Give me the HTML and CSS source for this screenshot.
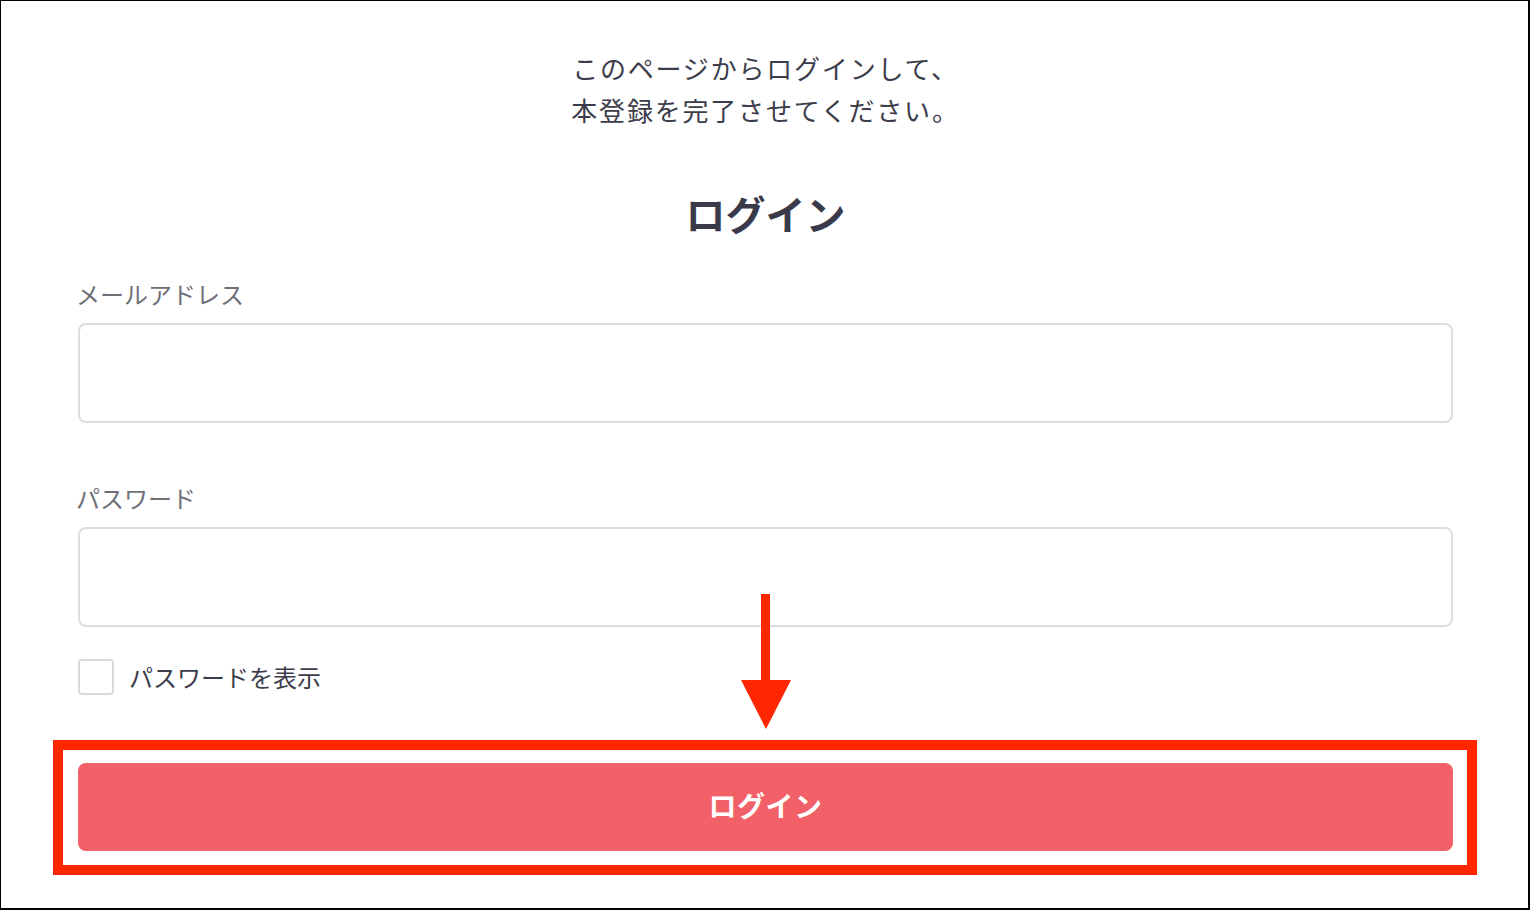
FILE: index.html
```html
<!DOCTYPE html>
<html lang="ja">
<head>
    <meta charset="UTF-8">
    <meta name="viewport" content="width=device-width, initial-scale=1.0">
    <title>ログイン</title>
    <link rel="stylesheet" href="styles.css">
</head>
<body>
    <div class="frame">
        <p class="intro">このページからログインして、<br>本登録を完了させてください。</p>
        <h1 class="title">ログイン</h1>
        <form class="login-form">
            <label class="field-label" for="email">メールアドレス</label>
            <input class="field-input" type="email" id="email" name="email">
            <label class="field-label second" for="password">パスワード</label>
            <input class="field-input" type="password" id="password" name="password">
            <label class="show-pass">
                <input type="checkbox" id="showPass">
                <span class="check-box"></span>
                <span>パスワードを表示</span>
            </label>
            <button type="submit" class="login-button">ログイン</button>
        </form>

        <!-- annotation -->
        <div class="mark-arrow">
            <svg width="50" height="135" viewBox="0 0 50 135">
                <rect x="20" y="0" width="9" height="88" fill="#ff2600"/>
                <polygon points="0,86 50,86 25,135" fill="#ff2600"/>
            </svg>
        </div>
        <div class="mark-box"></div>
    </div>
</body>
</html>
```

FILE: styles.css
```css
* { box-sizing: border-box; }
body { margin: 0; background: #fff; font-family: "Noto Sans CJK JP", "Noto Sans", sans-serif; color: #3c3c4a; }
.frame { position: relative; width: 1530px; height: 910px; border: solid #000; border-width: 1px 2px 2px 1px; padding: 46px 75px 0 77px; }
.intro { margin: 0; text-align: center; font-size: 26px; line-height: 42px; letter-spacing: 1.8px; }
.title { margin: 54px 0 0; text-align: center; font-size: 40px; line-height: 56px; font-weight: 700; color: #3a3a4a; }
.login-form { display: flex; flex-direction: column; margin-top: 36px; }
.field-label { font-size: 24px; line-height: 34px; color: #6f6f78; margin-left: -2px; }
.field-label.second { margin-top: 58px; }
.field-input { margin-top: 12px; height: 100px; border: 2px solid #dcdce3; border-radius: 8px; background: #fff; font-size: 24px; padding: 0 20px; outline: none; }
.show-pass { display: flex; align-items: center; gap: 15px; margin-top: 32px; font-size: 24px; line-height: 36px; color: #3c3c4a; }
.show-pass input { display: none; }
.check-box { width: 36px; height: 36px; border: 2px solid #d8d8e0; border-radius: 4px; background: #fff; }
.login-button { margin-top: 68px; height: 88px; border: none; border-radius: 8px; background: #f26167; color: #fff; font-family: inherit; font-size: 28px; line-height: 34px; font-weight: 700; letter-spacing: 0.5px; padding: 0 0 4px; }
.mark-arrow { position: absolute; left: 740px; top: 593px; width: 50px; height: 135px; }
.mark-arrow svg { display: block; }
.mark-box { position: absolute; left: 52px; top: 739px; width: 1424px; height: 135px; border: 10px solid #ff2600; }
```
